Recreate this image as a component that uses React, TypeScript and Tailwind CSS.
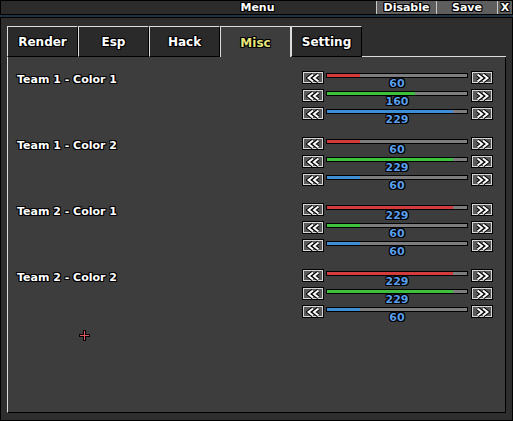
import React from 'react';

const outline = "[text-shadow:1px_0_0_#000,-1px_0_0_#000,0_1px_0_#000,0_-1px_0_#000,1px_1px_0_#000,-1px_-1px_0_#000,1px_-1px_0_#000,-1px_1px_0_#000]";

const groups = [
  { label: "Team 1 - Color 1", values: [60, 160, 229] },
  { label: "Team 1 - Color 2", values: [60, 229, 60] },
  { label: "Team 2 - Color 1", values: [229, 60, 60] },
  { label: "Team 2 - Color 2", values: [229, 229, 60] },
];

const fills = ["bg-[#d23c3c]", "bg-[#3ec23e]", "bg-[#3e8fd6]"];

const tabs = ["Render", "Esp", "Hack", "Misc", "Setting"];

const Chevrons: React.FC<{ dir: "left" | "right" }> = ({ dir }) => {
  const d = dir === "left"
    ? "M7 1.5 L2.5 5 L7 8.5 M12.5 1.5 L8 5 L12.5 8.5"
    : "M2.5 1.5 L7 5 L2.5 8.5 M8 1.5 L12.5 5 L8 8.5";
  return (
    <svg width="15" height="10" viewBox="0 0 15 10">
      <path d={d} fill="none" stroke="#000" strokeWidth="4" strokeLinejoin="miter" />
      <path d={d} fill="none" stroke="#fff" strokeWidth="2" strokeLinejoin="miter" />
    </svg>
  );
};

const ArrowButton: React.FC<{ dir: "left" | "right" }> = ({ dir }) => (
  <div className="w-[22px] h-[13px] border border-black bg-[#5c5c5c] shadow-[inset_1px_1px_0_#d6d6d6,inset_-1px_-1px_0_#d6d6d6] flex items-center justify-center">
    <Chevrons dir={dir} />
  </div>
);

const SliderRow: React.FC<{ value: number; fill: string }> = ({ value, fill }) => (
  <div className="flex h-[18px] items-start">
    <ArrowButton dir="left" />
    <div className="ml-[2px] w-[142px] flex flex-col">
      <div className="mt-[2px] h-[5px] border border-black bg-[#7d7d7d] flex">
        <div className={fill} style={{ width: `${(value / 255) * 100}%` }} />
      </div>
      <div className={`text-center text-[11px] leading-[12px] font-bold text-[#5a9de8] ${outline}`}>{value}</div>
    </div>
    <div className="ml-[3px]">
      <ArrowButton dir="right" />
    </div>
  </div>
);

export default function App() {
  return (
    <div className="w-[513px] h-[421px] bg-[#1f3341] overflow-hidden font-['DejaVu_Sans',sans-serif] text-white">
      {/* title bar */}
      <div className="h-[15px] flex bg-[#2b2b2b] border border-black">
        <div className="flex-1 flex justify-center items-center pl-[138px]">
          <span className={`text-[11px] leading-none font-bold ${outline}`}>Menu</span>
        </div>
        <div className="w-[61px] flex items-center justify-center bg-[#5e5e5e] border-l border-r border-[#c8c8c8]">
          <span className={`text-[11px] leading-none font-bold ${outline}`}>Disable</span>
        </div>
        <div className="w-[61px] flex items-center justify-center bg-[#5e5e5e] border-r border-[#c8c8c8]">
          <span className={`text-[11px] leading-none font-bold ${outline}`}>Save</span>
        </div>
        <div className="w-[14px] flex items-center justify-center bg-[#5e5e5e]">
          <span className={`text-[11px] leading-none font-bold ${outline}`}>X</span>
        </div>
      </div>

      {/* window */}
      <div className="mt-[2px] h-[404px] bg-[#2e2e2e] border border-black pl-[6px] pr-[6px] pt-[8px] pb-[7px] flex flex-col">
        <div className="flex h-[31px]">
          {tabs.map((t) => {
            const active = t === "Misc";
            return (
              <div
                key={t}
                className={
                  active
                    ? "w-[71px] bg-[#3d3d3d] border-t border-l border-r border-[#dcdcdc] flex items-center justify-center pt-[1px]"
                    : "w-[71px] bg-[#2a2a2a] border-t border-l border-[#dcdcdc] border-r-black border-r border-b border-b-black flex items-center justify-center pt-[1px]"
                }
              >
                <span className={`text-[12px] leading-none font-bold ${active ? "text-[#e6e67a]" : "text-white"} ${outline}`}>{t}</span>
              </div>
            );
          })}
          <div className="flex-1 border-b border-[#dcdcdc]" />
        </div>
        <div className="relative flex-1 bg-[#3d3d3d] border-l border-[#dcdcdc] border-r border-r-black border-b border-b-black pt-[14px] pl-[9px] flex flex-col gap-[12px]">
          {groups.map((g) => (
            <div key={g.label} className="flex">
              <div className={`w-[285px] pt-[3px] text-[11px] leading-none font-bold ${outline}`}>{g.label}</div>
              <div className="flex flex-col">
                {g.values.map((v, i) => (
                  <SliderRow key={i} value={v} fill={fills[i]} />
                ))}
              </div>
            </div>
          ))}
          {/* cursor */}
          <svg className="absolute left-[71px] top-[273px]" width="11" height="11" viewBox="0 0 11 11">
            <path d="M4 0h3v4h4v3h-4v4h-3v-4h-4v-3h4z" fill="#000" />
            <path d="M5 1h1v4h4v1h-4v4h-1v-4h-4v-1h4z" fill="#e05a5a" />
          </svg>
        </div>
      </div>
    </div>
  );
}
